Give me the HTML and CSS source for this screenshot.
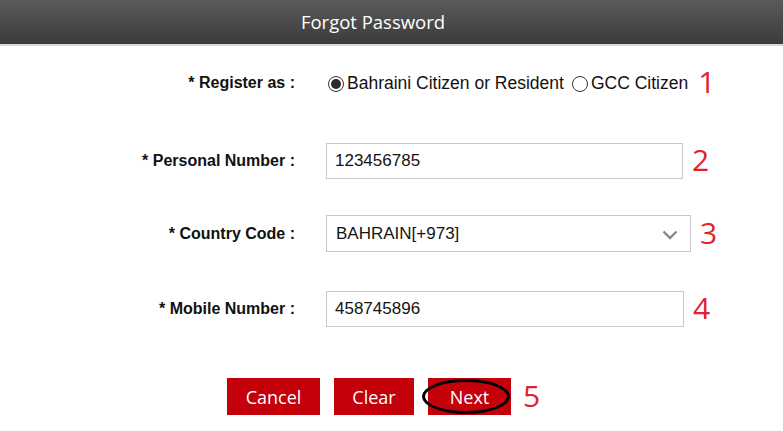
FILE: index.html
```html
<!DOCTYPE html>
<html lang="en">
<head>
<meta charset="utf-8">
<title>Forgot Password</title>
<link rel="stylesheet" href="styles.css">
</head>
<body>
<header class="topbar"><h1 class="title">Forgot Password</h1></header>
<form class="form">
  <div class="row row-1">
    <div class="label">* Register as :</div>
    <div class="radios">
      <label class="radio"><input type="radio" name="reg" checked><span>Bahraini Citizen or Resident</span></label>
      <label class="radio"><input type="radio" name="reg"><span>GCC Citizen</span></label>
    </div>
    <div class="num num-1">1</div>
  </div>
  <div class="row row-2">
    <div class="label">* Personal Number :</div>
    <div class="field f-personal">123456785</div>
    <div class="num">2</div>
  </div>
  <div class="row row-3">
    <div class="label">* Country Code :</div>
    <div class="field f-country">BAHRAIN[+973]
      <svg class="chev" width="16" height="10" viewBox="0 0 16 10"><path d="M1.5 1.5 L8 8 L14.5 1.5" fill="none" stroke="#8a8a8a" stroke-width="2.4"/></svg>
    </div>
    <div class="num">3</div>
  </div>
  <div class="row row-4">
    <div class="label">* Mobile Number :</div>
    <div class="field f-mobile">458745896</div>
    <div class="num">4</div>
  </div>
  <div class="actions">
    <button type="button" class="btn btn-cancel">Cancel</button>
    <button type="button" class="btn btn-clear">Clear</button>
    <button type="button" class="btn btn-next">Next<span class="ring"></span></button>
    <div class="num num-5">5</div>
  </div>
</form>
</body>
</html>
```
FILE: styles.css
```css
* { box-sizing: border-box; }
html, body { margin: 0; padding: 0; background: #fff; }
body { font-family: "Liberation Sans", Arial, sans-serif; color: #111; width: 783px; height: 431px; overflow: hidden; }

.topbar {
  height: 46px;
  background: linear-gradient(#5a5a5a, #3b3b3b);
  border-bottom: 2px solid #d8d8d8;
  display: flex;
  align-items: center;
  justify-content: center;
  padding-right: 37px;
}
.title {
  margin: 0 0 2px 0;
  font-family: "Open Sans", sans-serif;
  font-weight: 400;
  font-size: 18.5px;
  color: #fff;
}

.form { display: flex; flex-direction: column; }
.row { display: flex; align-items: center; height: 36px; }
.row-1 { margin-top: 19px; }
.row-2 { margin-top: 42px; }
.row-3 { margin-top: 36px; height: 37px; }
.row-4 { margin-top: 39px; }

.label {
  width: 295px;
  flex: none;
  text-align: right;
  font-weight: 700;
  font-size: 16px;
  color: #111;
  margin-right: 31px;
}

.radios { display: flex; align-items: center; font-size: 17.5px; color: #111; margin-left: 2px; }
.radio { display: flex; align-items: center; margin-right: 8px; }
.radio input {
  appearance: none;
  -webkit-appearance: none;
  width: 16px; height: 16px;
  margin: 1px 3px 0 0;
  border: 1px solid #333;
  border-radius: 50%;
  background: #fff;
  display: grid;
  place-items: center;
}
.radio input:checked::after {
  content: "";
  width: 10px; height: 10px;
  border-radius: 50%;
  background: #2b2b2b;
}
.radio:last-child { margin-right: 0; }

.field {
  height: 100%;
  border: 1px solid #c9c9c9;
  display: flex;
  align-items: center;
  padding-left: 8px;
  font-size: 17px;
  color: #141414;
}
.f-personal { width: 357px; }
.f-country { width: 365px; position: relative; padding-left: 9px; }
.f-mobile { width: 358px; }
.chev { position: absolute; right: 12px; top: 14px; }

.num {
  font-family: "Open Sans", sans-serif;
  font-size: 30px;
  color: #e0222b;
  margin-left: 9px;
  line-height: 1;
  margin-top: -2px;
}
.num-1 { margin-left: 10px; }

.actions { display: flex; align-items: center; margin-top: 51px; margin-left: 227px; height: 37px; }
.btn {
  height: 37px;
  border: none;
  background: #c4000b;
  color: #fff;
  font-family: "Open Sans", sans-serif;
  font-size: 18px;
  padding: 0;
  margin-right: 14px;
  position: relative;
}
.btn-cancel { width: 93px; }
.btn-clear { width: 80px; }
.btn-next { width: 83px; margin-right: 0; }
.ring {
  position: absolute;
  left: -6px; top: 1px;
  width: 88px; height: 35px;
  border: 3.5px solid #000;
  border-radius: 50%;
}
.num-5 { margin-left: 12px; }
```
